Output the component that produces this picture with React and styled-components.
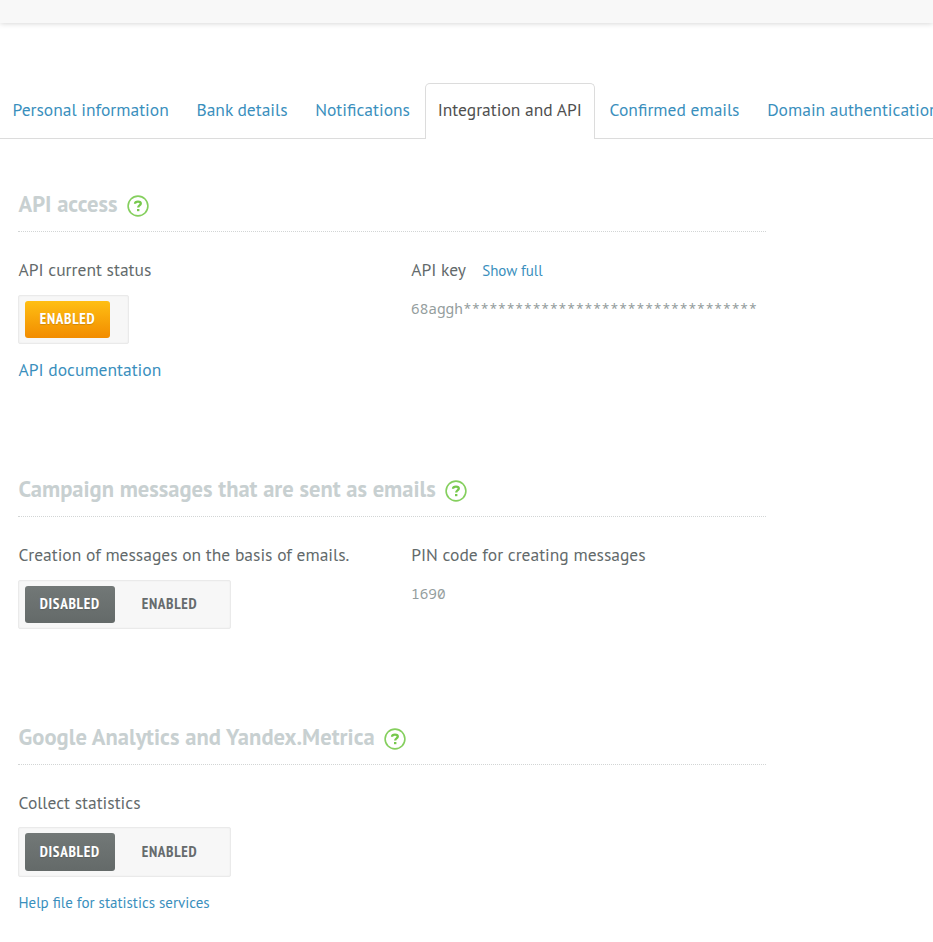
import React from 'react';
import styled, { createGlobalStyle, css } from 'styled-components';

const GlobalStyle = createGlobalStyle`
  * { box-sizing: border-box; }
  body {
    margin: 0;
    background: #fff;
    color: #636a6b;
    font-family: "PT Sans", "Open Sans", "Noto Sans", sans-serif;
    overflow: hidden;
  }
`;

const Page = styled.div`
  height: 942px;
  overflow: hidden;
`;

const TopBar = styled.header`
  height: 23px;
  background: #f8f8f8;
  box-shadow: 0 0 6px rgba(0, 0, 0, 0.2);
`;

const Tabs = styled.nav`
  display: flex;
  gap: 1.7px;
  height: 56px;
  margin: 60px 0 44px;
  white-space: nowrap;
  box-shadow: inset 0 -1px #dcdcdc;
`;

const Tab = styled.a`
  flex: none;
  height: 56px;
  padding: 0 12px;
  border: 1px solid transparent;
  border-bottom: 0;
  border-radius: 5px 5px 0 0;
  font-size: 17.5px;
  line-height: 52px;
  color: #3a8fbd;
  cursor: pointer;
  &:first-child { padding-left: 11.5px; }
  ${(p) =>
    p.$active &&
    css`
      background: #fff;
      border-color: #dcdcdc;
      color: #4f4f4f;
    `}
`;

const Section = styled.section`
  width: 748px;
  height: ${(p) => p.$height}px;
  margin-left: 18px;
`;

const SectionHeader = styled.div`
  display: flex;
  align-items: flex-start;
  gap: 9px;
  height: 49px;
  padding-left: 0.5px;
  border-bottom: 1px dotted #d2d5d5;
`;

const Title = styled.h2`
  margin: 0;
  font-size: 22.55px;
  line-height: 42px;
  font-weight: 700;
  letter-spacing: ${(p) => p.$tracking || 0}px;
  color: #c8d0d1;
`;

const HelpSvg = styled.svg`
  flex: none;
  width: 22px;
  height: 22px;
  margin-top: 12px;
`;

const Columns = styled.div`
  display: grid;
  grid-template-columns: 393px 1fr;
  padding-top: 25px;
`;

const Column = styled.div`
  display: flex;
  flex-direction: column;
  align-items: flex-start;
  white-space: nowrap;
`;

const Label = styled.div`
  display: flex;
  align-items: baseline;
  gap: 16.4px;
  height: 26px;
  padding-left: ${(p) => (p.$inset ? 0.5 : 0.2)}px;
  font-size: 17.5px;
  line-height: 26px;
`;

const Link = styled.a`
  font-size: ${(p) => (p.$small ? 15 : 17.5)}px;
  line-height: 26px;
  color: #3a8fbd;
  cursor: pointer;
`;

const FootLink = styled(Link)`
  margin-top: 13px;
  padding-left: 0.5px;
`;

const Switch = styled.div`
  display: flex;
  gap: 12px;
  width: ${(p) => p.$width}px;
  height: ${(p) => (p.$tall ? 50 : 49)}px;
  margin-top: ${(p) => (p.$tall ? 11 : 12)}px;
  padding: 5px 6px;
  border: 1px solid #eaeaea;
  border-radius: 2px;
  background: #f7f7f7;
  box-shadow: inset 0 0 2px rgba(0, 0, 0, 0.06);
`;

const fills = {
  orange: 'linear-gradient(#ffbf13, #f28c00)',
  grey: 'linear-gradient(#727877, #646a69)',
};

const Option = styled.button`
  width: ${(p) => p.$width}px;
  height: 100%;
  margin: 0;
  padding: 0 0 ${(p) => (p.$tall ? 2 : 3)}px 14.7px;
  border: 0;
  border-radius: 3px;
  text-align: left;
  background: ${(p) => fills[p.$fill] || 'transparent'};
  color: ${(p) => (p.$fill ? '#fff' : '#666b6d')};
  text-shadow: ${(p) => (p.$fill ? '0 1px 1px rgba(0, 0, 0, 0.15)' : 'none')};
  font: 700 15.2px "PT Sans Narrow", "Open Sans Condensed", "Open Sans", sans-serif;
  letter-spacing: 0.68px;
`;

const Code = styled.div`
  margin-top: 13px;
  font: 14.43px/26px "Noto Sans Mono", "DejaVu Sans Mono", monospace;
  color: #949d9d;
`;

function HelpIcon() {
  return (
    <HelpSvg viewBox="0 0 22 22" fill="none">
      <circle cx="11" cy="11" r="9.9" stroke="#85cf5e" strokeWidth="1.6" />
      <path d="M8 8.8C8.1 7.2 9.2 6.6 11 6.6c1.8 0 2.8.7 2.8 2 0 1.8-2.6 1.8-2.6 3.8" stroke="#76c84c" strokeWidth="2.3" />
      <path d="M10 14h2.4v2.2H10z" fill="#76c84c" />
    </HelpSvg>
  );
}

function Header({ children, tracking }) {
  return (
    <SectionHeader>
      <Title $tracking={tracking}>{children}</Title>
      <HelpIcon />
    </SectionHeader>
  );
}

const tabs = [
  'Personal information',
  'Bank details',
  'Notifications',
  'Integration and API',
  'Confirmed emails',
  'Domain authentication',
];

export default function App() {
  return (
    <Page>
      <GlobalStyle />
      <TopBar />
      <Tabs>
        {tabs.map((name) => (
          <Tab key={name} $active={name === 'Integration and API'}>{name}</Tab>
        ))}
      </Tabs>
      <Section $height={285}>
        <Header>API access</Header>
        <Columns>
          <Column>
            <Label $inset>API current status</Label>
            <Switch $width={111}>
              <Option $width={85} $fill="orange">ENABLED</Option>
            </Switch>
            <FootLink>API documentation</FootLink>
          </Column>
          <Column>
            <Label>API key <Link $small>Show full</Link></Label>
            <Code>68aggh{'*'.repeat(34)}</Code>
          </Column>
        </Columns>
      </Section>
      <Section $height={248}>
        <Header>Campaign messages that are sent as emails</Header>
        <Columns>
          <Column>
            <Label $inset>Creation of messages on the basis of emails.</Label>
            <Switch $width={213}>
              <Option $width={90} $fill="grey">DISABLED</Option>
              <Option $width={85}>ENABLED</Option>
            </Switch>
          </Column>
          <Column>
            <Label>PIN code for creating messages</Label>
            <Code>1690</Code>
          </Column>
        </Columns>
      </Section>
      <Section $height={200}>
        <Header tracking={0.045}>Google Analytics and Yandex.Metrica</Header>
        <Columns>
          <Column>
            <Label $inset>Collect statistics</Label>
            <Switch $width={213} $tall>
              <Option $width={90} $fill="grey" $tall>DISABLED</Option>
              <Option $width={85} $tall>ENABLED</Option>
            </Switch>
            <FootLink $small>Help file for statistics services</FootLink>
          </Column>
        </Columns>
      </Section>
    </Page>
  );
}
